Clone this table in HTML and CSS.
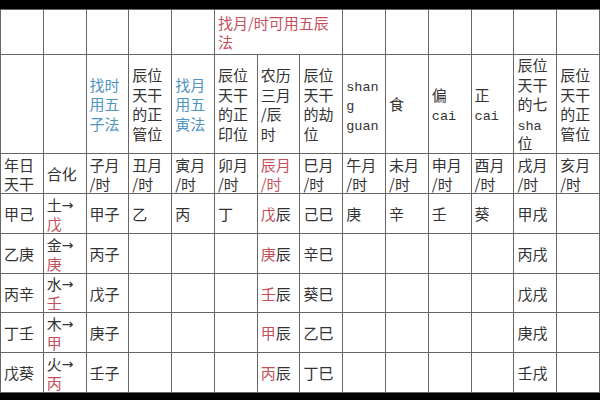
FILE: index.html
```html
<!DOCTYPE html>
<html lang="zh-CN">
<head>
<meta charset="utf-8">
<link rel="stylesheet" href="styles.css">
</head>
<body>
<table class="grid">
  <tr class="r-top">
    <td></td><td></td><td></td><td></td><td></td>
    <td colspan="3" class="red">找月/时可用五辰<br>法</td>
    <td></td><td></td><td></td><td></td><td></td><td></td>
  </tr>
  <tr class="r-head">
    <td></td>
    <td></td>
    <td class="blue">找时<br>用五<br>子法</td>
    <td>辰位<br>天干<br>的正<br>管位</td>
    <td class="blue">找月<br>用五<br>寅法</td>
    <td>辰位<br>天干<br>的正<br>印位</td>
    <td>农历<br>三月<br>/辰<br>时</td>
    <td>辰位<br>天干<br>的劫<br>位</td>
    <td class="wrap"><span class="lat">shang guan</span></td>
    <td>食</td>
    <td>偏<br><span class="lat">cai</span></td>
    <td>正<br><span class="lat">cai</span></td>
    <td>辰位<br>天干<br>的七<br><span class="lat">sha</span><br>位</td>
    <td>辰位<br>天干<br>的正<br>管位</td>
  </tr>
  <tr class="r-row">
    <td>年日<br>天干</td>
    <td>合化</td>
    <td>子月<br>/时</td>
    <td>丑月<br>/时</td>
    <td>寅月<br>/时</td>
    <td>卯月<br>/时</td>
    <td class="red">辰月<br>/时</td>
    <td>巳月<br>/时</td>
    <td>午月<br>/时</td>
    <td>未月<br>/时</td>
    <td>申月<br>/时</td>
    <td>酉月<br>/时</td>
    <td>戌月<br>/时</td>
    <td>亥月<br>/时</td>
  </tr>
  <tr class="r-row">
    <td>甲己</td>
    <td class="hua">土<span class="arr">→</span><br><span class="red">戊</span></td>
    <td>甲子</td>
    <td>乙</td>
    <td>丙</td>
    <td>丁</td>
    <td><span class="red">戊</span>辰</td>
    <td>己巳</td>
    <td>庚</td>
    <td>辛</td>
    <td>壬</td>
    <td>葵</td>
    <td>甲戌</td>
    <td></td>
  </tr>
  <tr class="r-row">
    <td>乙庚</td>
    <td class="hua">金<span class="arr">→</span><br><span class="red">庚</span></td>
    <td>丙子</td>
    <td></td><td></td><td></td>
    <td><span class="red">庚</span>辰</td>
    <td>辛巳</td>
    <td></td><td></td><td></td><td></td>
    <td>丙戌</td>
    <td></td>
  </tr>
  <tr class="r-row r-short">
    <td>丙辛</td>
    <td class="hua">水<span class="arr">→</span><br><span class="red">壬</span></td>
    <td>戊子</td>
    <td></td><td></td><td></td>
    <td><span class="red">壬</span>辰</td>
    <td>葵巳</td>
    <td></td><td></td><td></td><td></td>
    <td>戊戌</td>
    <td></td>
  </tr>
  <tr class="r-row">
    <td>丁壬</td>
    <td class="hua">木<span class="arr">→</span><br><span class="red">甲</span></td>
    <td>庚子</td>
    <td></td><td></td><td></td>
    <td><span class="red">甲</span>辰</td>
    <td>乙巳</td>
    <td></td><td></td><td></td><td></td>
    <td>庚戌</td>
    <td></td>
  </tr>
  <tr class="r-row">
    <td>戊葵</td>
    <td class="hua">火<span class="arr">→</span><br><span class="red">丙</span></td>
    <td>壬子</td>
    <td></td><td></td><td></td>
    <td><span class="red">丙</span>辰</td>
    <td>丁巳</td>
    <td></td><td></td><td></td><td></td>
    <td>壬戌</td>
    <td></td>
  </tr>
</table>
</body>
</html>
```

FILE: styles.css
```css
html, body {
  margin: 0;
  padding: 0;
  background: #000;
  width: 600px;
  height: 400px;
  overflow: hidden;
}
body {
  padding-top: 9px;
  box-sizing: border-box;
}
.grid {
  width: 600px;
  table-layout: fixed;
  border-collapse: collapse;
  background: #fff;
  font-family: "Noto Sans CJK SC", "Noto Sans", sans-serif;
  font-size: 15px;
  line-height: 19.5px;
  color: #333;
}
.grid td {
  border: 1px solid #666;
  padding: 0 3px;
  vertical-align: middle;
  text-align: left;
  overflow: hidden;
}
.r-top { height: 45px; }
.r-head { height: 99px; }
.r-row { height: 40px; }
.r-short { height: 39px; }
.r-row td { line-height: 19px; }
.red { color: #c4505c; }
.blue { color: #4f95bf; }
.lat {
  font-family: "Liberation Mono", monospace;
  font-size: 13.5px;
  line-height: 1;
}
.wrap { overflow-wrap: anywhere; }
.arr {
  font-family: "DejaVu Sans", sans-serif;
  font-size: 14px;
  line-height: 1;
  vertical-align: 1px;
}
```
